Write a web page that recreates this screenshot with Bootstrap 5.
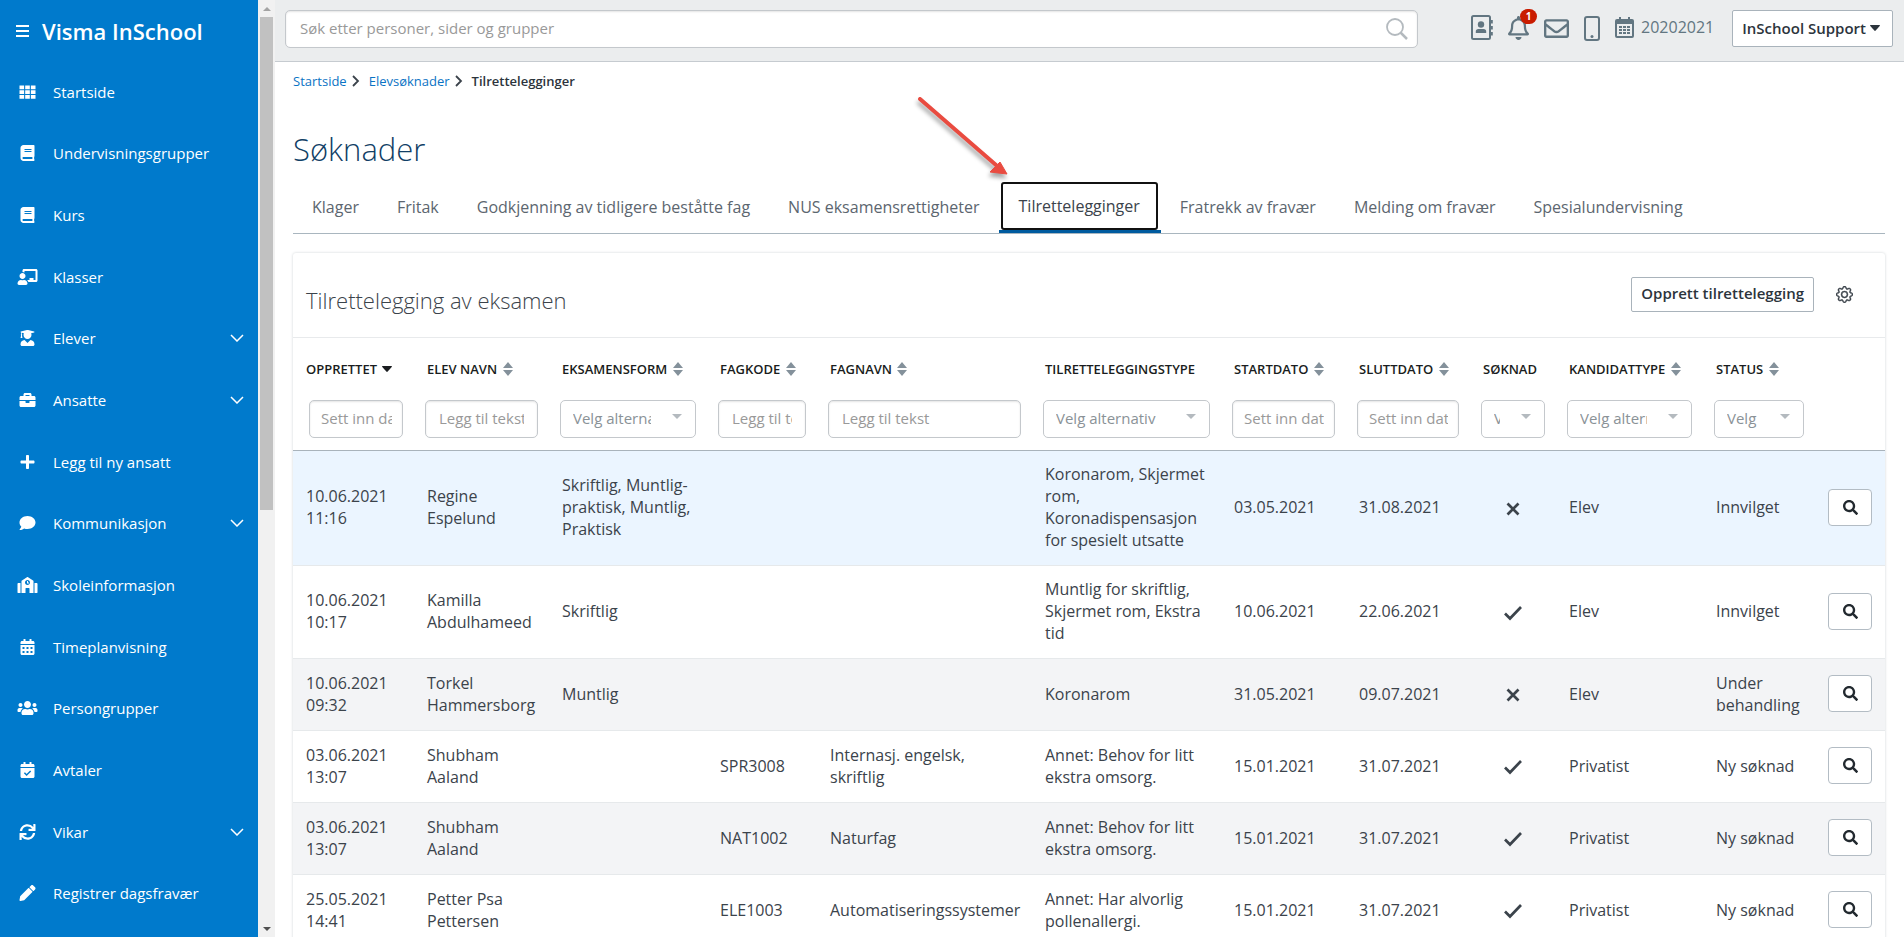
<!DOCTYPE html>
<html lang="nb">
<head>
<meta charset="utf-8">
<meta name="viewport" content="width=device-width, initial-scale=1">
<title>Visma InSchool</title>
<link href="https://cdn.jsdelivr.net/npm/bootstrap@5.3.0/dist/css/bootstrap.min.css" rel="stylesheet">
<style>
  body { font-family: "Open Sans", sans-serif; font-size: 16px; line-height: 22px; color: #3b434b; background: #fff; }
  svg { fill: currentColor; flex: none; }
  a { color: #0a73c4; }

  /* side menu */
  .side-menu { width: 258px; background: #007acc; flex: none; }
  .side-title { height: 61px; padding-left: 16px; gap: 13px; font-size: 22px; font-weight: 600; }
  .side-menu .nav { padding-bottom: 13px; min-height: 0; }
  .side-menu .nav-item { flex: 1 1 0; min-height: 0; }
  .side-menu .nav-link { padding: 0 14px 0 17px; color: #fff; font-size: 15px; height: 100%; }
  .menu-icon { width: 36px; }
  .menu-icon svg { display: block; width: 21px; height: 16px; }
  .side-scroll { width: 17px; background: #f1f1f1; flex: none; }
  .side-scroll .arrow { height: 17px; }
  .side-scroll .thumb { flex: 54 1 0; margin: 0 2px; background: #c1c1c1; }
  .side-scroll .rest { flex: 45 1 0; }

  /* top bar */
  .top-bar { height: 62px; padding: 10px 11px 0 10px; background: #ebedee; border-bottom: 1px solid #c6cbd0; }
  .search-wrap { margin-right: 53px; }
  .search-wrap .form-control { height: 38px; padding: 0 50px 2px 14px; font-size: 15px; border-color: #c4c8cc; border-radius: 5px; box-shadow: inset 0 1px 2px #e4e4e4; }
  .search-wrap svg { position: absolute; right: 9px; top: 7px; color: #b4babf; }
  ::placeholder { color: #999 !important; opacity: 1; }
  .top-icons { gap: 15px; height: 38px; padding-bottom: 2px; color: #627681; }
  .top-icons a { color: inherit; display: flex; position: relative; text-decoration: none; }
  .top-icons .year { gap: 7px; margin-right: 18px; padding-bottom: 2px; align-items: center; }
  .note-count { position: absolute; left: 12px; top: -7px; width: 17px; height: 15px; border-radius: 8px; background: #c91c00; color: #fff; font-size: 10px; font-weight: 700; line-height: 15px; text-align: center; }
  .plain-btn { background: #fff; border: 1px solid #a9b3bb; border-radius: 2px; color: #2c343c; font-size: 15px; font-weight: 600; white-space: nowrap; }
  .plain-btn.user { height: 37px; padding: 0 12px 2px 9px; gap: 4px; }
  .plain-btn.create { height: 35px; padding: 0 9px 2px; }

  /* page heading */
  .page-body { padding: 0 19px 0 18px; }
  .crumbs { height: 38px; font-size: 13px; gap: 5px; }
  .crumbs a { text-decoration: none; }
  .crumbs span { font-weight: 600; color: #2c343c; }
  h1 { font-size: 31px; line-height: 40px; font-weight: 300; color: #113f66; margin: 29px 0 13px; }
  .app-tabs { border-bottom: 1px solid #a9b6bf; height: 52px; flex-wrap: nowrap; white-space: nowrap; }
  .app-tabs .nav-item { position: relative; display: flex; }
  .app-tabs .nav-link { padding: 0 19px 2px; color: #5c666f; display: flex; align-items: center; }
  .app-tabs .nav-link.active { margin: 0 3px 3px 2px; padding: 0 16px; color: #3b434b; border: 2px solid #111; border-radius: 3px; }
  .app-tabs .active-item::after { content: ""; position: absolute; left: 0; right: 0; bottom: 0; height: 3px; background: #005b9f; }
  .pointer-arrow { position: absolute; right: 100%; bottom: 100%; margin: 0 -12px 4px 0; filter: drop-shadow(-1px 4px 2px rgba(0,0,0,.35)); }

  /* panel */
  .panel { margin-top: 19px; border-radius: 3px; box-shadow: 0 0 3px #cfd3d6; }
  .panel-head { height: 85px; padding: 0 32px 0 13px; border-bottom: 1px solid #e8eaec; }
  h2 { font-size: 22px; line-height: 30px; font-weight: 300; margin: 10px 0 0; color: #3b434b; }
  .panel-head .actions { gap: 22px; padding-bottom: 2px; }
  .gear { color: #3b434b; border: 0; background: none; padding: 0; }
  .app-table { table-layout: fixed; width: 100%; margin: 0; }
  .app-table th { padding: 0 0 0 13px; height: 62px; font-size: 13px; font-weight: 600; color: #1a1d20; white-space: nowrap; text-transform: uppercase; vertical-align: middle; }
  .app-table th svg { margin: -3px 0 0 2px; }
  .filters td { height: 50px; padding: 0 11px 12px 11px; vertical-align: bottom; }
  .filters td:first-child { padding-left: 16px; }
  .filters .form-control, .filters .form-select { height: 38px; font-size: 15px; line-height: 22px; padding: 0 13px 2px; color: #8a9297; border: 1px solid #c4c8cc; border-radius: 5px; }
  .filters .form-control { box-shadow: inset 0 1px 2px #e4e4e4; }
  .filters .form-control.date { padding: 0 10px 2px 11px; }
  .filters .form-select { padding: 0 44px 2px 12px; background: #fff url("data:image/svg+xml,%3csvg xmlns='http://www.w3.org/2000/svg' viewBox='0 0 10 5'%3e%3cpath fill='%23b4babf' d='M0 0h10L5 5z'/%3e%3c/svg%3e") no-repeat right 13px top 13px / 10px 5px; }
  .app-table thead { border-bottom: 1px solid #a9b3bb; }
  .app-table tbody tr { height: 72px; }
  .app-table tbody td { padding: 12px 10px 14px 13px; vertical-align: middle; border-bottom: 1px solid #e6e9eb; }
  .app-table tbody td:last-child { padding: 0 0 2px 13px; }
  .app-table tbody tr:nth-child(odd) td { background: #f3f4f6; }
  .app-table tbody tr.chosen td { background: #ebf5ff; }
  .app-table tbody .flag { text-align: center; padding: 0 14px 2px; }
  .view-btn { width: 44px; height: 37px; padding: 0; display: flex; align-items: center; justify-content: center; background: #fff; border: 1px solid #b3bcc4; border-radius: 4px; color: #22292f; }
</style>
</head>
<body class="vh-100 overflow-hidden">

<svg class="d-none" xmlns="http://www.w3.org/2000/svg">
  <symbol id="grid" viewBox="0 0 512 512"><path d="M0 48h148v120H0zM182 48h148v120H182zM364 48h148v120H364zM0 198h148v120H0zM182 198h148v120H182zM364 198h148v120H364zM0 348h148v120H0zM182 348h148v120H182zM364 348h148v120H364z"/></symbol>
  <symbol id="book" viewBox="0 0 448 512"><path d="M448 360V24c0-13.3-10.7-24-24-24H96C43 0 0 43 0 96v320c0 53 43 96 96 96h328c13.3 0 24-10.7 24-24v-16c0-7.5-3.5-14.3-8.9-18.7-4.2-15.4-4.2-59.3 0-74.7 5.4-4.3 8.9-11.1 8.9-18.6zM128 134c0-3.3 2.7-6 6-6h212c3.3 0 6 2.7 6 6v20c0 3.3-2.7 6-6 6H134c-3.3 0-6-2.7-6-6v-20zm0 64c0-3.3 2.7-6 6-6h212c3.3 0 6 2.7 6 6v20c0 3.3-2.7 6-6 6H134c-3.3 0-6-2.7-6-6v-20zm253.4 250H96c-17.7 0-32-14.3-32-32 0-17.6 14.4-32 32-32h285.4c-1.9 17.1-1.9 46.9 0 64z"/></symbol>
  <symbol id="teacher" viewBox="0 0 640 512"><path d="M208 352c-2.39 0-4.78.35-7.06 1.09C187.98 357.3 174.35 360 160 360c-14.35 0-27.98-2.7-40.95-6.91-2.28-.74-4.66-1.09-7.05-1.09C49.94 352-.33 402.48 0 464.62.14 490.88 21.73 512 48 512h224c26.27 0 47.86-21.12 48-47.38.33-62.14-49.94-112.62-112-112.62zm-48-32c53.02 0 96-42.98 96-96s-42.98-96-96-96-96 42.98-96 96 42.98 96 96 96zM592 0H208c-26.47 0-48 22.25-48 49.59V96c23.42 0 45.1 6.78 64 17.8V64h352v288h-64v-64H384v64h-76.24c19.1 16.69 33.12 38.73 39.69 64H592c26.47 0 48-22.25 48-49.59V49.59C640 22.25 618.47 0 592 0z"/></symbol>
  <symbol id="graduate" viewBox="0 0 448 512"><path d="M319.4 320.6L224 416l-95.4-95.4C57.1 323.7 0 382.2 0 454.4v9.6c0 26.5 21.5 48 48 48h352c26.5 0 48-21.5 48-48v-9.6c0-72.2-57.1-130.7-128.6-133.8zM13.6 79.8l6.4 1.5v58.4c-7 4.2-12 11.5-12 20.3 0 8.4 4.6 15.4 11.1 19.7L3.5 242c-1.7 6.9 2.1 14 7.6 14h41.8c5.5 0 9.3-7.1 7.6-14l-15.6-62.3C51.4 175.4 56 168.4 56 160c0-8.8-5-16.1-12-20.3V87.1l66 15.9c-8.6 17.2-14 36.4-14 57 0 70.7 57.3 128 128 128s128-57.3 128-128c0-20.6-5.3-39.8-14-57l96.3-23.2c18.2-4.4 18.2-27.1 0-31.5l-190.4-46c-13-3.1-26.7-3.1-39.7 0L13.6 48.2c-18.1 4.4-18.1 27.2 0 31.6z"/></symbol>
  <symbol id="briefcase" viewBox="0 0 512 512"><path d="M320 336c0 8.84-7.16 16-16 16h-96c-8.84 0-16-7.16-16-16v-48H0v144c0 25.6 22.4 48 48 48h416c25.6 0 48-22.4 48-48V288H320v48zm144-208h-80V80c0-25.6-22.4-48-48-48H176c-25.6 0-48 22.4-48 48v48H48c-25.6 0-48 22.4-48 48v80h512v-80c0-25.6-22.4-48-48-48zm-144 0H192V96h128v32z"/></symbol>
  <symbol id="plus" viewBox="0 0 448 512"><path d="M416 208H272V64c0-17.7-14.3-32-32-32h-32c-17.7 0-32 14.3-32 32v144H32c-17.7 0-32 14.3-32 32v32c0 17.7 14.3 32 32 32h144v144c0 17.7 14.3 32 32 32h32c17.7 0 32-14.3 32-32V304h144c17.7 0 32-14.3 32-32v-32c0-17.7-14.3-32-32-32z"/></symbol>
  <symbol id="comment" viewBox="0 0 512 512"><path d="M256 32C114.6 32 0 125.1 0 240c0 49.6 21.4 95 57 130.7C44.5 421.1 2.7 466 2.2 466.5c-2.2 2.3-2.8 5.7-1.5 8.7S4.8 480 8 480c66.3 0 116-31.8 140.6-51.4 32.7 12.3 69 19.4 107.4 19.4 141.4 0 256-93.1 256-208S397.4 32 256 32z"/></symbol>
  <symbol id="school" viewBox="0 0 640 512"><path d="M0 224v272c0 8.84 7.16 16 16 16h80V192H32c-17.67 0-32 14.33-32 32zm360-48h-24v-40c0-4.42-3.58-8-8-8h-16c-4.42 0-8 3.58-8 8v64c0 4.42 3.58 8 8 8h48c4.42 0 8-3.58 8-8v-16c0-4.42-3.58-8-8-8zm137.75-63.96l-160-106.67a32.02 32.02 0 0 0-35.5 0l-160 106.67A32.002 32.002 0 0 0 128 138.66V512h128V368c0-8.84 7.16-16 16-16h96c8.84 0 16 7.16 16 16v144h128V138.67c0-10.7-5.35-20.7-14.25-26.63zM320 256c-44.18 0-80-35.82-80-80s35.82-80 80-80 80 35.82 80 80-35.82 80-80 80zm288-64h-64v320h80c8.84 0 16-7.16 16-16V224c0-17.67-14.33-32-32-32z"/></symbol>
  <symbol id="calendar" viewBox="0 0 448 512"><path fill-rule="evenodd" d="M448 160H0v-48c0-26.5 21.5-48 48-48h48V12c0-6.6 5.4-12 12-12h40c6.6 0 12 5.4 12 12v52h128V12c0-6.6 5.4-12 12-12h40c6.6 0 12 5.4 12 12v52h48c26.5 0 48 21.5 48 48zM0 192h448v272c0 26.5-21.5 48-48 48H48c-26.5 0-48-21.5-48-48zM64 256v64h64v-64zM192 256v64h64v-64zM320 256v64h64v-64zM64 384v64h64v-64zM192 384v64h64v-64zM320 384v64h64v-64z"/></symbol>
  <symbol id="calcheck" viewBox="0 0 448 512"><path d="M448 160H0v-48c0-26.5 21.5-48 48-48h48V12c0-6.6 5.4-12 12-12h40c6.6 0 12 5.4 12 12v52h128V12c0-6.6 5.4-12 12-12h40c6.6 0 12 5.4 12 12v52h48c26.5 0 48 21.5 48 48zM0 192h448v272c0 26.5-21.5 48-48 48H48c-26.5 0-48-21.5-48-48z"/><path d="M125 345l70 70 130-130" fill="none" stroke="#007acc" stroke-width="48"/></symbol>
  <symbol id="users" viewBox="0 0 640 512"><path d="M96 224c35.3 0 64-28.7 64-64s-28.7-64-64-64-64 28.7-64 64 28.7 64 64 64zm448 0c35.3 0 64-28.7 64-64s-28.7-64-64-64-64 28.7-64 64 28.7 64 64 64zm32 32h-64c-17.6 0-33.5 7.1-45.1 18.6 40.3 22.1 68.9 62 75.1 109.4h66c17.7 0 32-14.3 32-32v-32c0-35.3-28.7-64-64-64zm-256 0c61.9 0 112-50.1 112-112S381.9 32 320 32 208 82.1 208 144s50.1 112 112 112zm76.8 32h-8.3c-20.8 10-43.9 16-68.5 16s-47.6-6-68.5-16h-8.3C179.6 288 128 339.6 128 403.2V432c0 26.5 21.5 48 48 48h288c26.5 0 48-21.5 48-48v-28.8c0-63.6-51.6-115.2-115.2-115.2zm-223.7-13.4C161.5 263.1 145.6 256 128 256H64c-35.3 0-64 28.7-64 64v32c0 17.7 14.3 32 32 32h65.9c6.3-47.4 34.9-87.3 75.2-109.4z"/></symbol>
  <symbol id="sync" viewBox="0 0 512 512"><path d="M440.65 12.57l4 82.77A247.16 247.16 0 0 0 255.83 8C134.73 8 33.91 94.92 12.29 209.82A12 12 0 0 0 24.09 224h49.05a12 12 0 0 0 11.67-9.26 175.91 175.91 0 0 1 317-56.94l-101.46-4.86a12 12 0 0 0-12.57 12v47.41a12 12 0 0 0 12 12H500a12 12 0 0 0 12-12V12a12 12 0 0 0-12-12h-47.37a12 12 0 0 0-11.98 12.57zM255.83 432a175.61 175.61 0 0 1-146-77.8l101.8 4.87a12 12 0 0 0 12.57-12v-47.4a12 12 0 0 0-12-12H12a12 12 0 0 0-12 12V500a12 12 0 0 0 12 12h47.35a12 12 0 0 0 12-12.6l-4.15-82.57A247.17 247.17 0 0 0 255.83 504c121.11 0 221.93-86.92 243.55-201.82a12 12 0 0 0-11.8-14.18h-49.05a12 12 0 0 0-11.67 9.26A175.86 175.86 0 0 1 255.83 432z"/></symbol>
  <symbol id="pencil" viewBox="0 0 512 512"><path d="M497.9 142.1l-46.1 46.1c-4.7 4.7-12.3 4.7-17 0l-111-111c-4.7-4.7-4.7-12.3 0-17l46.1-46.1c18.7-18.7 49.1-18.7 67.9 0l60.1 60.1c18.8 18.7 18.8 49.1 0 67.9zM284.2 99.8L21.6 362.4.4 483.9c-2.9 16.4 11.4 30.6 27.8 27.8l121.5-21.3 262.6-262.6c4.7-4.7 4.7-12.3 0-17l-111-111c-4.8-4.7-12.4-4.7-17.1 0z"/></symbol>
  <symbol id="chevron" viewBox="0 0 14 8"><path d="M1 1l6 6 6-6" fill="none" stroke="currentColor" stroke-width="1.5"/></symbol>
  <symbol id="search" viewBox="0 0 512 512"><path d="M505 442.7L405.3 343c-4.5-4.5-10.6-7-17-7H372c27.6-35.3 44-79.7 44-128C416 93.1 322.9 0 208 0S0 93.1 0 208s93.1 208 208 208c48.3 0 92.7-16.4 128-44v16.3c0 6.4 2.5 12.5 7 17l99.7 99.7c9.4 9.4 24.6 9.4 33.9 0l28.3-28.3c9.4-9.4 9.4-24.6.1-34zM208 336c-70.7 0-128-57.2-128-128 0-70.7 57.2-128 128-128 70.7 0 128 57.2 128 128 0 70.7-57.2 128-128 128z"/></symbol>
  <symbol id="sort" viewBox="0 0 10 14"><path d="M0 6l5-6 5 6zM0 8h10l-5 6z"/></symbol>
  <symbol id="down" viewBox="0 0 10 6"><path d="M.5 0h9q.8.3.2 1L5.7 5.6q-.7.7-1.4 0L.3 1Q-.3.3.5 0z"/></symbol>
  <symbol id="yes" viewBox="0 0 20 16"><path d="M2 8.5l5 5L18 2" fill="none" stroke="currentColor" stroke-width="2.7"/></symbol>
  <symbol id="no" viewBox="0 0 14 14"><path d="M1.5 1.5l11 11m0-11l-11 11" fill="none" stroke="currentColor" stroke-width="2.7"/></symbol>
</svg>

<div class="d-flex h-100">
  <aside class="side-menu d-flex flex-column text-white">
    <div class="side-title d-flex align-items-center">
      <svg width="13" height="12" viewBox="0 0 13 12"><path d="M0 0h13v2H0zM0 5h13v2H0zM0 10h13v2H0z"/></svg>
      <span>Visma InSchool</span>
    </div>
    <ul class="nav flex-column flex-nowrap flex-fill">
      <li class="nav-item"><a href="#" class="nav-link d-flex align-items-center"><span class="menu-icon"><svg><use href="#grid"/></svg></span>Startside</a></li>
      <li class="nav-item"><a href="#" class="nav-link d-flex align-items-center"><span class="menu-icon"><svg><use href="#book"/></svg></span>Undervisningsgrupper</a></li>
      <li class="nav-item"><a href="#" class="nav-link d-flex align-items-center"><span class="menu-icon"><svg><use href="#book"/></svg></span>Kurs</a></li>
      <li class="nav-item"><a href="#" class="nav-link d-flex align-items-center"><span class="menu-icon"><svg><use href="#teacher"/></svg></span>Klasser</a></li>
      <li class="nav-item"><a href="#" class="nav-link d-flex align-items-center"><span class="menu-icon"><svg><use href="#graduate"/></svg></span>Elever<svg class="ms-auto" width="14" height="8"><use href="#chevron"/></svg></a></li>
      <li class="nav-item"><a href="#" class="nav-link d-flex align-items-center"><span class="menu-icon"><svg><use href="#briefcase"/></svg></span>Ansatte<svg class="ms-auto" width="14" height="8"><use href="#chevron"/></svg></a></li>
      <li class="nav-item"><a href="#" class="nav-link d-flex align-items-center"><span class="menu-icon"><svg><use href="#plus"/></svg></span>Legg til ny ansatt</a></li>
      <li class="nav-item"><a href="#" class="nav-link d-flex align-items-center"><span class="menu-icon"><svg><use href="#comment"/></svg></span>Kommunikasjon<svg class="ms-auto" width="14" height="8"><use href="#chevron"/></svg></a></li>
      <li class="nav-item"><a href="#" class="nav-link d-flex align-items-center"><span class="menu-icon"><svg><use href="#school"/></svg></span>Skoleinformasjon</a></li>
      <li class="nav-item"><a href="#" class="nav-link d-flex align-items-center"><span class="menu-icon"><svg><use href="#calendar"/></svg></span>Timeplanvisning</a></li>
      <li class="nav-item"><a href="#" class="nav-link d-flex align-items-center"><span class="menu-icon"><svg><use href="#users"/></svg></span>Persongrupper</a></li>
      <li class="nav-item"><a href="#" class="nav-link d-flex align-items-center"><span class="menu-icon"><svg><use href="#calcheck"/></svg></span>Avtaler</a></li>
      <li class="nav-item"><a href="#" class="nav-link d-flex align-items-center"><span class="menu-icon"><svg><use href="#sync"/></svg></span>Vikar<svg class="ms-auto" width="14" height="8"><use href="#chevron"/></svg></a></li>
      <li class="nav-item"><a href="#" class="nav-link d-flex align-items-center"><span class="menu-icon"><svg><use href="#pencil"/></svg></span>Registrer dagsfravær</a></li>
    </ul>
  </aside>
  <div class="side-scroll d-flex flex-column">
    <div class="arrow d-flex align-items-center justify-content-center"><svg width="8" height="4" viewBox="0 0 8 4"><path fill="#a3a3a3" d="M0 4h8L4 0z"/></svg></div>
    <div class="thumb"></div>
    <div class="rest"></div>
    <div class="arrow d-flex align-items-center justify-content-center"><svg width="8" height="4" viewBox="0 0 8 4"><path fill="#505050" d="M0 0h8L4 4z"/></svg></div>
  </div>

  <div class="flex-fill overflow-hidden">
    <header class="top-bar d-flex">
      <div class="search-wrap flex-fill position-relative">
        <input type="search" class="form-control" placeholder="Søk etter personer, sider og grupper" aria-label="Søk etter personer, sider og grupper">
        <svg width="24" height="24" viewBox="0 0 24 24"><path d="M15.5 15.5L22 22" fill="none" stroke="currentColor" stroke-width="2.5"/><circle cx="10" cy="10" r="8" fill="none" stroke="currentColor" stroke-width="1.8"/></svg>
      </div>
      <div class="top-icons d-flex align-items-center">
        <a href="#" aria-label="Kontakter"><svg width="22" height="26" viewBox="0 0 22 26"><rect x="1" y="1" width="18" height="23" rx="1.5" fill="none" stroke="currentColor" stroke-width="2"/><circle cx="10" cy="9.5" r="3.2"/><path d="M4.8 18v-1.5q0-2.5 2.6-2.5h5.2q2.6 0 2.6 2.5V18zM20 5h1.8v3.5H20zM20 11h1.8v3.5H20zM20 17h1.8v3.5H20z"/></svg></a>
        <a href="#" aria-label="Varsler"><svg width="21" height="24" viewBox="0 0 448 512"><path d="M439.39 362.29c-19.32-20.76-55.47-51.99-55.47-154.29 0-77.7-54.48-139.9-127.94-155.16V32c0-17.67-14.32-32-31.98-32s-31.98 14.33-31.98 32v20.84C118.56 68.1 64.08 130.3 64.08 208c0 102.3-36.15 133.53-55.47 154.29-6 6.45-8.66 14.16-8.61 21.71.11 16.4 12.98 32 32.1 32h383.8c19.12 0 32-15.6 32.1-32 .05-7.55-2.61-15.27-8.61-21.71zM67.53 368c21.22-27.97 44.42-74.33 44.53-159.42 0-.2-.06-.38-.06-.58 0-61.86 50.14-112 112-112s112 50.14 112 112c0 .2-.06.38-.06.58.11 85.1 23.31 131.46 44.53 159.42H67.53zM224 512c35.32 0 63.97-28.65 63.97-64H160.03c0 35.35 28.65 64 63.97 64z"/></svg><span class="note-count">1</span></a>
        <a href="#" aria-label="Meldinger"><svg width="25" height="25" viewBox="0 0 512 512"><path d="M464 64H48C21.49 64 0 85.49 0 112v288c0 26.51 21.49 48 48 48h416c26.51 0 48-21.49 48-48V112c0-26.51-21.49-48-48-48zm0 48v40.805c-22.422 18.259-58.168 46.651-134.587 106.49-16.841 13.247-50.201 45.072-73.413 44.701-23.208.375-56.579-31.459-73.413-44.701C106.18 199.465 70.425 171.067 48 152.805V112h416zM48 400V214.398c22.914 18.251 55.409 43.862 104.938 82.646 21.857 17.205 60.134 55.186 103.062 54.955 42.717.231 80.509-37.199 103.053-54.947 49.528-38.783 82.032-64.401 104.947-82.653V400H48z"/></svg></a>
        <a href="#" aria-label="Mobil"><svg width="16" height="25" viewBox="0 0 16 25"><rect x="1" y="1" width="14" height="23" rx="2" fill="none" stroke="currentColor" stroke-width="2"/><circle cx="8" cy="20.5" r="1.5"/></svg></a>
        <a href="#" class="year"><svg width="19" height="21" viewBox="0 0 19 21"><path fill-rule="evenodd" d="M4 0h2v2h7V0h2v2h2q2 0 2 2v15q0 2-2 2H2q-2 0-2-2V4q0-2 2-2h2zM2 7v12h15V7z"/><path d="M4 9h3v2H4zM8 9h3v2H8zM12 9h3v2h-3zM4 12h3v2H4zM8 12h3v2H8zM12 12h3v2h-3zM4 15h3v2H4zM8 15h3v2H8zM12 15h3v2h-3z"/></svg>20202021</a>
      </div>
      <button type="button" class="plain-btn user d-flex align-items-center">InSchool Support <svg width="10" height="6"><use href="#down"/></svg></button>
    </header>

    <main class="page-body">
      <nav class="crumbs d-flex align-items-center" aria-label="Brødsmuler">
        <a href="#">Startside</a>
        <svg class="me-1" width="8" height="12" viewBox="0 0 8 12"><path d="M1 1l5 5-5 5" fill="none" stroke="#3b434b" stroke-width="1.8"/></svg>
        <a href="#">Elevsøknader</a>
        <svg class="me-1" width="8" height="12" viewBox="0 0 8 12"><path d="M1 1l5 5-5 5" fill="none" stroke="#3b434b" stroke-width="1.8"/></svg>
        <span>Tilrettelegginger</span>
      </nav>
      <h1>Søknader</h1>
      <ul class="nav app-tabs">
        <li class="nav-item"><a href="#" class="nav-link">Klager</a></li>
        <li class="nav-item"><a href="#" class="nav-link">Fritak</a></li>
        <li class="nav-item"><a href="#" class="nav-link">Godkjenning av tidligere beståtte fag</a></li>
        <li class="nav-item"><a href="#" class="nav-link">NUS eksamensrettigheter</a></li>
        <li class="nav-item active-item"><a href="#" class="nav-link active" aria-current="page">Tilrettelegginger</a>
          <svg class="pointer-arrow" width="96" height="84" viewBox="0 0 96 84"><path d="M5 5l76 66" fill="none" stroke="#e94b40" stroke-width="4" stroke-linecap="round"/><path fill="#e94b40" d="M92 80l-7-12-10 10z" stroke="#e94b40" stroke-width="1"/></svg></li>
        <li class="nav-item"><a href="#" class="nav-link">Fratrekk av fravær</a></li>
        <li class="nav-item"><a href="#" class="nav-link">Melding om fravær</a></li>
        <li class="nav-item"><a href="#" class="nav-link">Spesialundervisning</a></li>
      </ul>

      <section class="panel">
        <div class="panel-head d-flex align-items-center justify-content-between">
          <h2>Tilrettelegging av eksamen</h2>
          <div class="actions d-flex align-items-center">
            <button type="button" class="plain-btn create">Opprett tilrettelegging</button>
            <button type="button" class="gear d-flex" aria-label="Innstillinger"><svg width="17" height="17" viewBox="0 0 16 16"><path stroke="currentColor" stroke-width=".4" d="M8 4.754a3.246 3.246 0 1 0 0 6.492 3.246 3.246 0 0 0 0-6.492zM5.754 8a2.246 2.246 0 1 1 4.492 0 2.246 2.246 0 0 1-4.492 0z"/><path stroke="currentColor" stroke-width=".4" d="M9.796 1.343c-.527-1.79-3.065-1.79-3.592 0l-.094.319a.873.873 0 0 1-1.255.52l-.292-.16c-1.64-.892-3.433.902-2.54 2.541l.159.292a.873.873 0 0 1-.52 1.255l-.319.094c-1.79.527-1.79 3.065 0 3.592l.319.094a.873.873 0 0 1 .52 1.255l-.16.292c-.892 1.64.901 3.434 2.541 2.54l.292-.159a.873.873 0 0 1 1.255.52l.094.319c.527 1.79 3.065 1.79 3.592 0l.094-.319a.873.873 0 0 1 1.255-.52l.292.16c1.64.893 3.434-.902 2.54-2.541l-.159-.292a.873.873 0 0 1 .52-1.255l.319-.094c1.79-.527 1.79-3.065 0-3.592l-.319-.094a.873.873 0 0 1-.52-1.255l.16-.292c.893-1.64-.902-3.433-2.541-2.54l-.292.159a.873.873 0 0 1-1.255-.52l-.094-.319zm-2.633.283c.246-.835 1.428-.835 1.674 0l.094.319a1.873 1.873 0 0 0 2.693 1.115l.291-.16c.764-.415 1.6.42 1.184 1.185l-.159.292a1.873 1.873 0 0 0 1.116 2.692l.318.094c.835.246.835 1.428 0 1.674l-.319.094a1.873 1.873 0 0 0-1.115 2.693l.16.291c.415.764-.42 1.6-1.185 1.184l-.291-.159a1.873 1.873 0 0 0-2.693 1.116l-.094.318c-.246.835-1.428.835-1.674 0l-.094-.319a1.873 1.873 0 0 0-2.692-1.115l-.292.16c-.764.415-1.6-.42-1.184-1.185l.159-.291A1.873 1.873 0 0 0 1.945 8.93l-.319-.094c-.835-.246-.835-1.428 0-1.674l.319-.094A1.873 1.873 0 0 0 3.06 4.377l-.16-.292c-.415-.764.42-1.6 1.185-1.184l.292.159a1.873 1.873 0 0 0 2.692-1.115l.094-.319z"/></svg></button>
          </div>
        </div>

        <table class="app-table">
          <colgroup>
            <col style="width:121px"><col style="width:135px"><col style="width:158px"><col style="width:110px"><col style="width:215px"><col style="width:189px"><col style="width:125px"><col style="width:124px"><col style="width:86px"><col style="width:147px"><col style="width:112px"><col style="width:70px">
          </colgroup>
          <thead>
            <tr>
              <th>Opprettet <svg width="10" height="6"><use href="#down"/></svg></th>
              <th>Elev navn <svg width="10" height="14" color="#84919b"><use href="#sort"/></svg></th>
              <th>Eksamensform <svg width="10" height="14" color="#84919b"><use href="#sort"/></svg></th>
              <th>Fagkode <svg width="10" height="14" color="#84919b"><use href="#sort"/></svg></th>
              <th>Fagnavn <svg width="10" height="14" color="#84919b"><use href="#sort"/></svg></th>
              <th>Tilretteleggingstype</th>
              <th>Startdato <svg width="10" height="14" color="#84919b"><use href="#sort"/></svg></th>
              <th>Sluttdato <svg width="10" height="14" color="#84919b"><use href="#sort"/></svg></th>
              <th>Søknad</th>
              <th>Kandidattype <svg width="10" height="14" color="#84919b"><use href="#sort"/></svg></th>
              <th>Status <svg width="10" height="14" color="#84919b"><use href="#sort"/></svg></th>
              <th></th>
            </tr>
            <tr class="filters">
              <td><input type="text" class="form-control date" placeholder="Sett inn dato" aria-label="Opprettet"></td>
              <td><input type="text" class="form-control" placeholder="Legg til tekst" aria-label="Elev navn"></td>
              <td><select class="form-select" aria-label="Eksamensform"><option>Velg alternativ</option></select></td>
              <td><input type="text" class="form-control" placeholder="Legg til tekst" aria-label="Fagkode"></td>
              <td><input type="text" class="form-control" placeholder="Legg til tekst" aria-label="Fagnavn"></td>
              <td><select class="form-select" aria-label="Tilretteleggingstype"><option>Velg alternativ</option></select></td>
              <td><input type="text" class="form-control date" placeholder="Sett inn dato" aria-label="Startdato"></td>
              <td><input type="text" class="form-control date" placeholder="Sett inn dato" aria-label="Sluttdato"></td>
              <td><select class="form-select" aria-label="Søknad"><option>Velg alternativ</option></select></td>
              <td><select class="form-select" aria-label="Kandidattype"><option>Velg alternativ</option></select></td>
              <td><select class="form-select" aria-label="Status"><option>Velg alternativ</option></select></td>
              <td></td>
            </tr>
          </thead>
          <tbody>
            <tr class="chosen"><td>10.06.2021 11:16</td><td>Regine Espelund</td><td>Skriftlig, Muntlig-praktisk, Muntlig, Praktisk</td><td></td><td></td><td>Koronarom, Skjermet rom, Koronadispensasjon for spesielt utsatte</td><td>03.05.2021</td><td>31.08.2021</td><td class="flag"><svg width="14" height="14"><use href="#no"/></svg></td><td>Elev</td><td>Innvilget</td><td><button type="button" class="view-btn" aria-label="Vis"><svg width="15" height="15"><use href="#search"/></svg></button></td></tr>
            <tr><td>10.06.2021 10:17</td><td>Kamilla Abdulhameed</td><td>Skriftlig</td><td></td><td></td><td>Muntlig for skriftlig, Skjermet rom, Ekstra tid</td><td>10.06.2021</td><td>22.06.2021</td><td class="flag"><svg width="20" height="16"><use href="#yes"/></svg></td><td>Elev</td><td>Innvilget</td><td><button type="button" class="view-btn" aria-label="Vis"><svg width="15" height="15"><use href="#search"/></svg></button></td></tr>
            <tr><td>10.06.2021 09:32</td><td>Torkel Hammersborg</td><td>Muntlig</td><td></td><td></td><td>Koronarom</td><td>31.05.2021</td><td>09.07.2021</td><td class="flag"><svg width="14" height="14"><use href="#no"/></svg></td><td>Elev</td><td>Under behandling</td><td><button type="button" class="view-btn" aria-label="Vis"><svg width="15" height="15"><use href="#search"/></svg></button></td></tr>
            <tr><td>03.06.2021 13:07</td><td>Shubham Aaland</td><td></td><td>SPR3008</td><td>Internasj. engelsk, skriftlig</td><td>Annet: Behov for litt ekstra omsorg.</td><td>15.01.2021</td><td>31.07.2021</td><td class="flag"><svg width="20" height="16"><use href="#yes"/></svg></td><td>Privatist</td><td>Ny søknad</td><td><button type="button" class="view-btn" aria-label="Vis"><svg width="15" height="15"><use href="#search"/></svg></button></td></tr>
            <tr><td>03.06.2021 13:07</td><td>Shubham Aaland</td><td></td><td>NAT1002</td><td>Naturfag</td><td>Annet: Behov for litt ekstra omsorg.</td><td>15.01.2021</td><td>31.07.2021</td><td class="flag"><svg width="20" height="16"><use href="#yes"/></svg></td><td>Privatist</td><td>Ny søknad</td><td><button type="button" class="view-btn" aria-label="Vis"><svg width="15" height="15"><use href="#search"/></svg></button></td></tr>
            <tr><td>25.05.2021 14:41</td><td>Petter Psa Pettersen</td><td></td><td>ELE1003</td><td>Automatiseringssystemer</td><td>Annet: Har alvorlig pollenallergi.</td><td>15.01.2021</td><td>31.07.2021</td><td class="flag"><svg width="20" height="16"><use href="#yes"/></svg></td><td>Privatist</td><td>Ny søknad</td><td><button type="button" class="view-btn" aria-label="Vis"><svg width="15" height="15"><use href="#search"/></svg></button></td></tr>
          </tbody>
        </table>
      </section>
    </main>
  </div>
</div>
<script src="https://cdn.jsdelivr.net/npm/bootstrap@5.3.0/dist/js/bootstrap.bundle.min.js"></script>
</body>
</html>
